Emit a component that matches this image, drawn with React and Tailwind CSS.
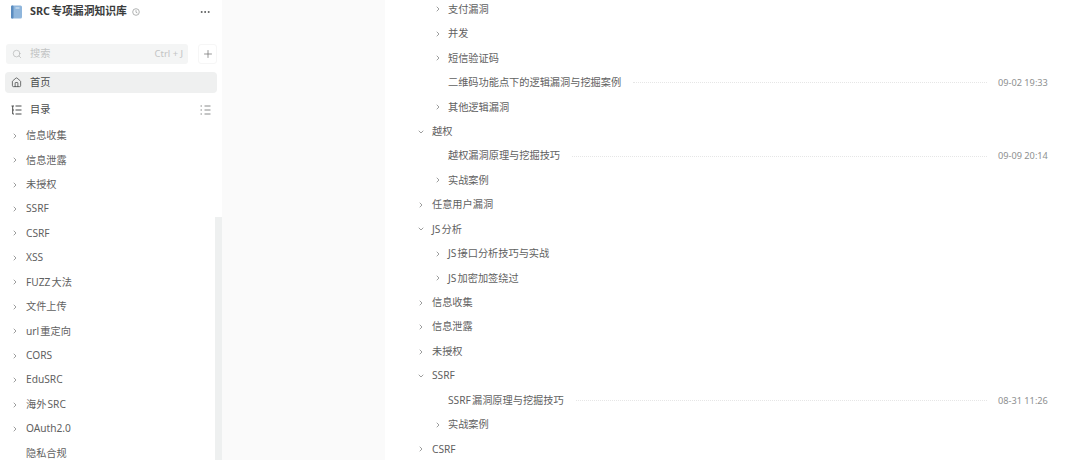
import React from "react";
import { Search, Plus, House, Ellipsis, ChevronRight, ChevronDown } from "lucide-react";

const font = { fontFamily: '"Noto Sans", "Noto Sans CJK SC", sans-serif' };

const side = ["信息收集","信息泄露","未授权","SSRF","CSRF","XSS","FUZZ 大法","文件上传","url 重定向","CORS","EduSRC","海外 SRC","OAuth2.0","隐私合规"];

const main = [
  { d: 1, o: "r", t: "支付漏洞" },
  { d: 1, o: "r", t: "并发" },
  { d: 1, o: "r", t: "短信验证码" },
  { d: 1, t: "二维码功能点下的逻辑漏洞与挖掘案例", time: "09-02 19:33" },
  { d: 1, o: "r", t: "其他逻辑漏洞" },
  { d: 0, o: "d", t: "越权" },
  { d: 1, t: "越权漏洞原理与挖掘技巧", time: "09-09 20:14" },
  { d: 1, o: "r", t: "实战案例" },
  { d: 0, o: "r", t: "任意用户漏洞" },
  { d: 0, o: "d", t: "JS 分析" },
  { d: 1, o: "r", t: "JS 接口分析技巧与实战" },
  { d: 1, o: "r", t: "JS 加密加签绕过" },
  { d: 0, o: "r", t: "信息收集" },
  { d: 0, o: "r", t: "信息泄露" },
  { d: 0, o: "r", t: "未授权" },
  { d: 0, o: "d", t: "SSRF" },
  { d: 1, t: "SSRF 漏洞原理与挖掘技巧", time: "08-31 11:26" },
  { d: 1, o: "r", t: "实战案例" },
  { d: 0, o: "r", t: "CSRF" },
];

function Caret({ o }) {
  if (o === "r") return <ChevronRight size={8} strokeWidth={2} className="text-[#6b6d6d]" />;
  if (o === "d") return <ChevronDown size={8} strokeWidth={2} className="text-[#6b6d6d]" />;
  return null;
}

export default function App() {
  return (
    <div style={font} className="flex h-[460px] w-[1080px] overflow-hidden bg-white text-[10.2px] text-[#5f6161] [word-spacing:-1.5px]">
      <aside className="relative flex w-[222px] shrink-0 flex-col overflow-hidden bg-white">
        <div className="flex h-[23px] shrink-0 items-center pl-[11px] pr-[11px]">
          <svg width="12" height="14" viewBox="0 0 12 14" className="shrink-0">
            <rect x="0" y="0.5" width="11" height="13" rx="1.5" fill="#8fb6dc" />
            <rect x="0" y="0.5" width="2.5" height="13" rx="1" fill="#5a8cc0" />
            <rect x="4.5" y="2.5" width="4" height="1" fill="#e2eef8" />
          </svg>
          <span className="ml-[7px] text-[10.8px] font-bold text-[#3a3c3c]">SRC 专项漏洞知识库</span>
          <svg width="8" height="8" viewBox="0 0 8 8" fill="none" stroke="#a8aaaa" strokeWidth="0.9" className="ml-[5px]">
            <circle cx="4" cy="4" r="3.3" />
            <path d="M4 2.2V4.3L5.4 5" />
          </svg>
          <Ellipsis size={12} strokeWidth={2} className="ml-auto text-[#555757]" />
        </div>
        <div className="mt-[21px] flex h-[20px] shrink-0 items-center gap-[10px] pl-[6px] pr-[5px]">
          <div className="flex h-full flex-1 items-center rounded-[3px] bg-[#f4f5f5] pl-[6px] pr-[5px] text-[#c2c4c4]">
            <Search size={10} strokeWidth={1.6} className="text-[#b0b2b2]" />
            <span className="ml-[8px]">搜索</span>
            <span className="ml-auto text-[9.4px] [word-spacing:0px]">Ctrl + J</span>
          </div>
          <div className="flex h-full w-[19px] items-center justify-center rounded-[3px] border border-[#f6f6f6]">
            <Plus size={12} strokeWidth={1.4} className="text-[#6a6c6c]" />
          </div>
        </div>
        <div className="mx-[5px] mt-[8px] flex h-[21px] shrink-0 items-center rounded-[4px] bg-[#eff0f0] pl-[6px] text-[#4a4c4c]">
          <House size={11} strokeWidth={1.7} />
          <span className="ml-[8px]">首页</span>
        </div>
        <div className="mx-[5px] mt-[6px] flex h-[21px] shrink-0 items-center pl-[6px] pr-[6px] text-[#4a4c4c]">
          <svg width="11" height="10" viewBox="0 0 11 10" fill="none" stroke="#4a4c4c" strokeWidth="1">
            <path d="M0.5 1H3M1.7 1V9M1.7 5H3M1.7 9H3M4.5 1H10.5M4.5 5H10.5M4.5 9H10.5" />
          </svg>
          <span className="ml-[8px]">目录</span>
          <svg width="11" height="10" viewBox="0 0 11 10" fill="none" stroke="#8a8c8c" strokeWidth="1" className="ml-auto">
            <path d="M0.5 1H2M0.5 5H2M0.5 9H2M4.5 1H10.5M4.5 5H10.5M4.5 9H10.5" />
          </svg>
        </div>
        <div className="mt-[3.5px] flex shrink-0 flex-col">
          {side.map((t, i) => (
            <div key={i} className="flex h-[24.45px] shrink-0 items-center pl-[11px]">
              <span className="flex w-[8px] justify-center">
                {i < 13 && <Caret o="r" />}
              </span>
              <span className="ml-[7px]">{t}</span>
            </div>
          ))}
        </div>
        <div className="absolute bottom-0 right-0 top-[217px] w-[7px] bg-[#eef0f0]" />
      </aside>
      <div className="w-[163px] shrink-0 bg-[#fafafa]" />
      <main className="-mt-[2.8px] flex flex-1 flex-col pr-[32px]">
        {main.map((r, i) => (
          <div key={i} className={`flex h-[24.45px] shrink-0 items-center ${r.d ? "pl-[49px]" : "pl-[32px]"}`}>
            <span className="flex w-[8px] justify-center">
              <Caret o={r.o} />
            </span>
            <span className={`whitespace-nowrap ${r.d ? "ml-[6px]" : "ml-[7px]"}`}>{r.t}</span>
            {r.time && (
              <>
                <span className="ml-[12px] flex-1 border-t border-dotted border-[#e6e6e6]" />
                <span className="ml-[11px] w-[50px] whitespace-nowrap text-[9.2px] text-[#8e9090] [word-spacing:0px]">{r.time}</span>
              </>
            )}
          </div>
        ))}
      </main>
    </div>
  );
}
